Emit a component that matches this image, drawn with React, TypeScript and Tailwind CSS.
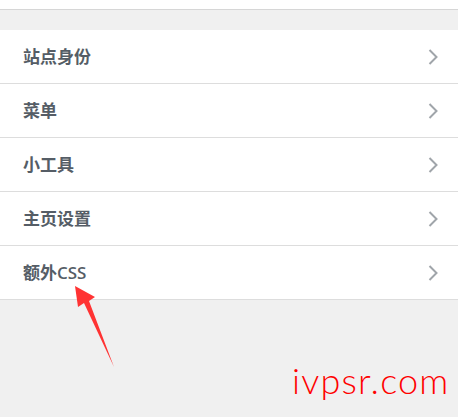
const ITEMS = ["站点身份", "菜单", "小工具", "主页设置", "额外CSS"];

function Chevron() {
  return (
    <svg width="12" height="18" viewBox="0 0 12 18" className="text-[#a0a5aa]">
      <path d="M2.5 2l7 7-7 7" fill="none" stroke="currentColor" strokeWidth="2" />
    </svg>
  );
}

export default function App() {
  return (
    <div
      className="relative h-[417px] w-[458px] overflow-hidden bg-[#f0f0f0]"
      style={{ fontFamily: '"Open Sans", "Noto Sans CJK SC", sans-serif' }}
    >
      <div className="h-[9px] border-b border-[#d6d6d6] bg-white box-content" />
      <div className="h-[20px]" />
      <ul className="bg-white">
        {ITEMS.map((label) => (
          <li
            key={label}
            className="flex h-[54px] items-center justify-between border-b border-[#dddddd] pl-[23px] pr-[19px]"
          >
            <span className="text-[17px] font-semibold text-[#555d66]">{label}</span>
            <Chevron />
          </li>
        ))}
      </ul>

      {/* annotation arrow */}
      <svg className="absolute left-0 top-0" width="458" height="417" viewBox="0 0 458 417">
        <path d="M75 286 L95 297 L89 301 L114 367 L84 303 L78 307 Z" fill="#ff3333" />
      </svg>

      {/* watermark */}
      <span
        className="absolute left-[292px] top-[362px] text-[36px] font-light leading-none tracking-[1.2px] text-[#ff0000]"
        style={{ fontFamily: "Lato, sans-serif" }}
      >
        ivpsr.com
      </span>
    </div>
  );
}
